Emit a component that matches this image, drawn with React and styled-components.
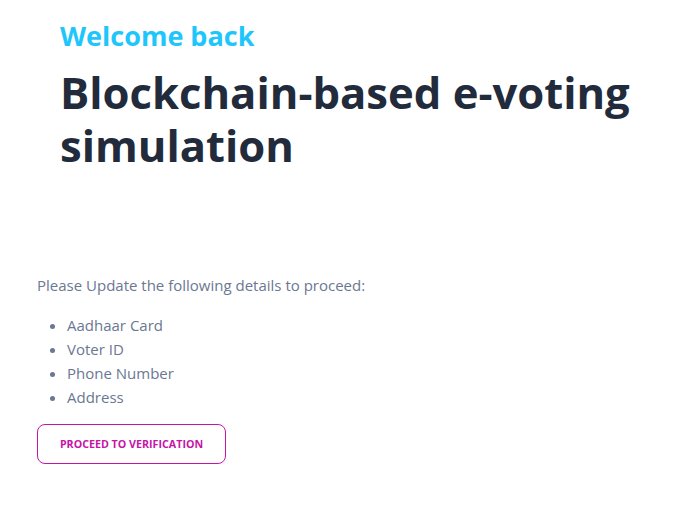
import React from "react";
import styled, { createGlobalStyle } from "styled-components";

const Global = createGlobalStyle`
  html, body { margin: 0; padding: 0; background: #ffffff; }
  body { font-family: "Open Sans", "Noto Sans", sans-serif; }
`;

const Page = styled.div`
  display: flex;
  flex-direction: column;
  padding: 0 37px;
`;

const Hero = styled.header`
  display: flex;
  flex-direction: column;
  padding: 18px 0 0 23px;
`;

const Kicker = styled.h2`
  margin: 0;
  font-size: 27px;
  line-height: 36px;
  font-weight: 700;
  color: #1fc6fb;
`;

const Title = styled.h1`
  margin: 12px 0 0;
  font-size: 43.6px;
  line-height: 53px;
  font-weight: 700;
  color: #222b3c;
`;

const Details = styled.section`
  display: flex;
  flex-direction: column;
  align-items: flex-start;
  margin-top: 101px;
`;

const Lead = styled.p`
  margin: 0;
  font-size: 15px;
  line-height: 24px;
  color: #6b7793;
`;

const List = styled.ul`
  margin: 16px 0 0;
  padding-left: 30px;
  font-size: 15px;
  line-height: 24px;
  color: #6b7793;
`;

const Item = styled.li``;

const Button = styled.button`
  margin-top: 15px;
  width: 189px;
  height: 40px;
  border: 1px solid #c714a6;
  border-radius: 8px;
  background: #ffffff;
  color: #c714a6;
  font-family: "Open Sans", sans-serif;
  font-size: 10.7px;
  font-weight: 700;
  text-transform: uppercase;
  cursor: pointer;
`;

const items = ["Aadhaar Card", "Voter ID", "Phone Number", "Address"];

export default function App() {
  return (
    <>
      <Global />
      <Page>
        <Hero>
          <Kicker>Welcome back</Kicker>
          <Title>Blockchain-based e-voting simulation</Title>
        </Hero>
        <Details>
          <Lead>Please Update the following details to proceed:</Lead>
          <List>
            {items.map((t) => (
              <Item key={t}>{t}</Item>
            ))}
          </List>
          <Button>Proceed to verification</Button>
        </Details>
      </Page>
    </>
  );
}
